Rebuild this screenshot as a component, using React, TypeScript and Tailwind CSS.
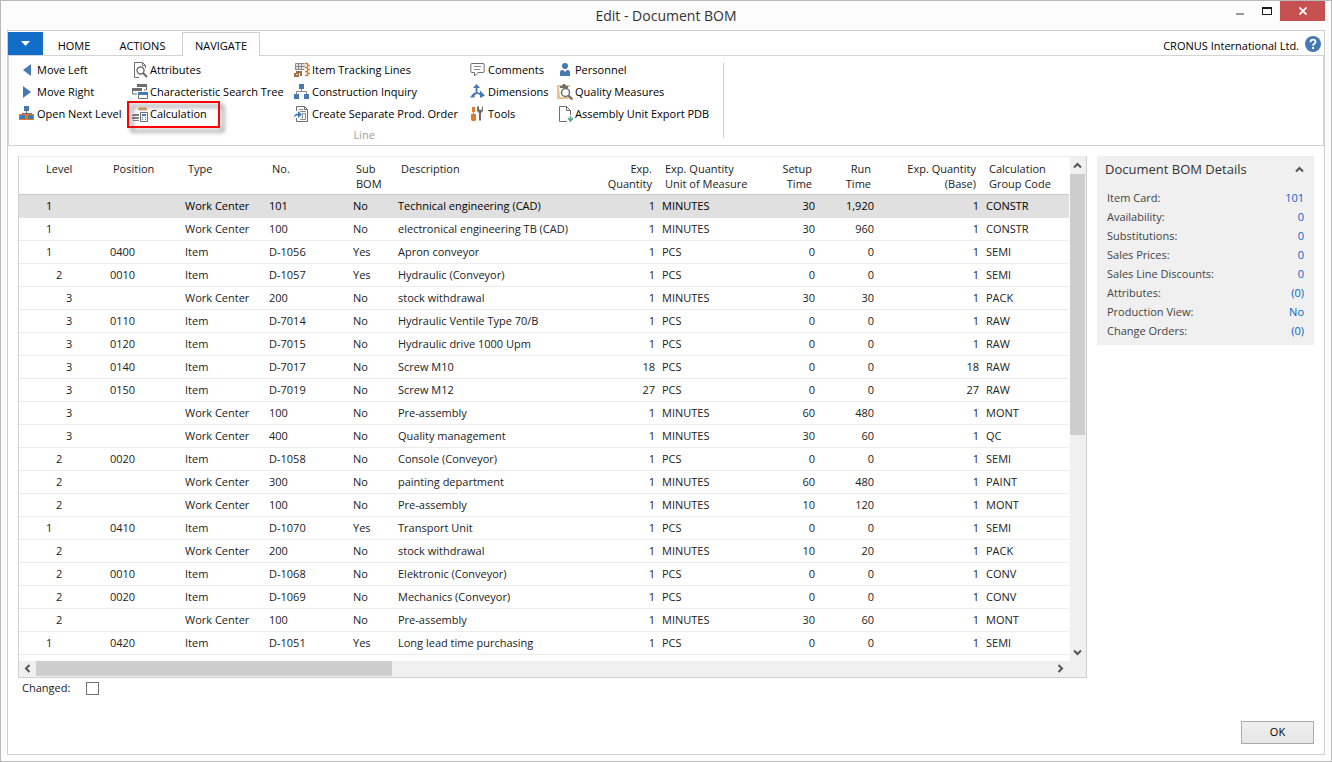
import React from "react";

const BLUE = "#4479b4";
const GRAY = "#6e6e6e";
const ORANGE = "#e07b28";

function Icon({ children }: { children: React.ReactNode }) {
  return (
    <svg viewBox="0 0 16 16" className="h-4 w-4 shrink-0" fill="none" aria-hidden="true">
      {children}
    </svg>
  );
}

const icons = {
  left: (
    <Icon>
      <path d="M12 2v12L4 8z" fill={BLUE} />
    </Icon>
  ),
  right: (
    <Icon>
      <path d="M4 2v12l8-6z" fill={BLUE} />
    </Icon>
  ),
  nextLevel: (
    <Icon>
      <path d="M5 0h5v5H5z" fill={BLUE} />
      <path d="M7 5h1v2h5v2h-1V8H4v1H3V7h4z" fill={GRAY} />
      <path d="M0 8h15v6H0z" fill={ORANGE} />
      <path d="M1 9h5v4H1zM9 9h5v4H9z" fill={BLUE} />
    </Icon>
  ),
  attributes: (
    <Icon>
      <path d="M7 15.500H2.500V.5h8l3 3V6M10.500.5v3h3" stroke={GRAY} />
      <circle cx="8.500" cy="8.500" r="3.500" stroke={GRAY} strokeWidth="1.400" />
      <path d="M11 11l4 4" stroke={GRAY} strokeWidth="2.200" />
    </Icon>
  ),
  searchTree: (
    <Icon>
      <path d="M5 0h10v3H5zM0 4h10v3H0z" fill={GRAY} />
      <path d="M14.500 3v3H12M.5 7v3H5" stroke={GRAY} />
      <path d="M6 8h10v3H6z" fill={BLUE} />
      <path d="M6.500 11v3.500h9V11" stroke={GRAY} />
    </Icon>
  ),
  calculation: (
    <Icon>
      <path d="M6 2h9v2H6z" fill="#dcaa6c" />
      <path d="M7 1h7v1H7zM7 4h7v1H7z" fill="#edcfa6" />
      <path d="M1 8h6v1H1zM0 9h7v1H0zM0 11h7v1H0zM0 12h7v1H0zM1 14h6v1H1z" fill="#858585" />
      <path d="M8.500 6.500h7v9h-7z" fill="#fff" stroke={GRAY} />
      <path d="M10 8h4v2h-4z" fill={BLUE} />
      <path d="M10 11h1v1h-1zM13 11h1v1h-1zM10 13h1v1h-1zM13 13h1v1h-1z" fill={BLUE} />
    </Icon>
  ),
  tracking: (
    <Icon>
      <path d="M2 2h9v6H2z" fill="#e3e3e3" />
      <path d="M1.500 1.500h9M1.500 1.500V8M1 4.500h10M1 7.500h9M4.500 1v7M7.500 1v7" stroke="#8a8a8a" />
      <path d="M13.500 1v13M11 1.500h2M14 3.500h2M11 5.500h2M14 7.500h2M11 9.500h2M14 11.500h2M11 13.500h3" stroke={ORANGE} strokeWidth="1.400" />
      <path d="M2 9h6v5H6v-3H2zM0 11h5v4H0z" fill="#9b6f48" />
      <path d="M2 12h2v1H2z" fill="#e9d6c4" />
    </Icon>
  ),
  inquiry: (
    <Icon>
      <path d="M5 0h5v5H5zM0 10h5v5H0zM10 10h5v5h-5z" fill={BLUE} />
      <path d="M7.500 5v2.500M2.500 10V7.500h10V10" stroke="#8a8a8a" />
    </Icon>
  ),
  prodOrder: (
    <Icon>
      <path d="M2.500 5V.5h8l3 3v12h-11V12M10.500.5v3h3" stroke={GRAY} />
      <path d="M5 3.500h4M6 5.500h6M8.500 7.500h3v6h-5v-1M8.500 7.500v5" stroke="#8a8a8a" />
      <path d="M0 12c0-3 1-4.500 4-4.500V5l4 3.500L4 12V9.500c-2 0-3 .5-4 2.500z" fill={BLUE} />
    </Icon>
  ),
  comments: (
    <Icon>
      <path
        d="M2 1.500h11a1.200 1.200 0 0 1 1.200 1.200v6.600a1.200 1.200 0 0 1-1.200 1.200H8L4.500 14v-3.500H2A1.200 1.200 0 0 1 .8 9.300V2.700A1.200 1.200 0 0 1 2 1.500z"
        stroke={GRAY}
      />
      <path d="M4 4.500h7M4 7.500h6" stroke="#8a8a8a" />
    </Icon>
  ),
  dimensions: (
    <Icon>
      <path d="M6.500 9V3M6.500 8.500L12 11M6.500 9L2 12" stroke={BLUE} strokeWidth="1.800" />
      <path d="M6.500 0L10 4H3zM10 6.500l5 5-5 2.500zM4.500 8v5.500H0z" fill={BLUE} />
    </Icon>
  ),
  tools: (
    <Icon>
      <path d="M2 1h3v5H2zM3 6h1v3H3zM1 8h5v6l-1 1H2l-1-1z" fill={ORANGE} />
      <path d="M7 1l2-1v3l1 1h1l1-1V0l1 1v4l-2 2v7l-1 1-1-1V7L7 5z" fill={GRAY} />
    </Icon>
  ),
  personnel: (
    <Icon>
      <circle cx="8" cy="4" r="3" fill={BLUE} />
      <path d="M3 14v-3.500C3 8.500 4.500 8 6 8l2 2 2-2c1.500 0 3 .5 3 2.500V14z" fill={BLUE} />
    </Icon>
  ),
  quality: (
    <Icon>
      <path d="M0 1h13v14H0z" fill="#e9c48c" />
      <path d="M2 3h11v10H3z" fill="#fff" />
      <path d="M3 4V2h2l1-2h2l1 2h2v2z" fill={GRAY} />
      <circle cx="8.500" cy="8.500" r="4" fill="#fff" stroke={GRAY} strokeWidth="1.500" />
      <path d="M11.500 11.500l4 4" stroke={GRAY} strokeWidth="2.200" />
    </Icon>
  ),
  exportPdb: (
    <Icon>
      <path d="M10 15.500H2.500V.5h7l4 4V9M9.500.5v4h4" stroke={GRAY} />
      <path d="M13.500 10v4M11 12l2.500 3 2.500-3" stroke="#5fa58a" strokeWidth="1.600" />
    </Icon>
  ),
};

type Action = { icon: keyof typeof icons; label: string; marked?: boolean };

const actionColumns: Action[][] = [
  [
    { icon: "left", label: "Move Left" },
    { icon: "right", label: "Move Right" },
    { icon: "nextLevel", label: "Open Next Level" },
  ],
  [
    { icon: "attributes", label: "Attributes" },
    { icon: "searchTree", label: "Characteristic Search Tree" },
    { icon: "calculation", label: "Calculation", marked: true },
  ],
  [
    { icon: "tracking", label: "Item Tracking Lines" },
    { icon: "inquiry", label: "Construction Inquiry" },
    { icon: "prodOrder", label: "Create Separate Prod. Order" },
  ],
  [
    { icon: "comments", label: "Comments" },
    { icon: "dimensions", label: "Dimensions" },
    { icon: "tools", label: "Tools" },
  ],
  [
    { icon: "personnel", label: "Personnel" },
    { icon: "quality", label: "Quality Measures" },
    { icon: "exportPdb", label: "Assembly Unit Export PDB" },
  ],
];

type Column = { title: string; width: string; right?: boolean };

const columns: Column[] = [
  { title: "Level", width: "w-[88px]" },
  { title: "Position", width: "w-[75px]" },
  { title: "Type", width: "w-[84px]" },
  { title: "No.", width: "w-[84px]" },
  { title: "Sub\nBOM", width: "w-[45px]" },
  { title: "Description", width: "" },
  { title: "Exp.\nQuantity", width: "w-[60px]", right: true },
  { title: "Exp. Quantity\nUnit of Measure", width: "w-[100px]" },
  { title: "Setup\nTime", width: "w-[60px]", right: true },
  { title: "Run\nTime", width: "w-[59px]", right: true },
  { title: "Exp. Quantity\n(Base)", width: "w-[105px]", right: true },
  { title: "Calculation\nGroup Code", width: "w-[86px]" },
];

const rows: string[][] = [
  ["1", "", "Work Center", "101", "No", "Technical engineering (CAD)", "1", "MINUTES", "30", "1,920", "1", "CONSTR"],
  ["1", "", "Work Center", "100", "No", "electronical engineering TB (CAD)", "1", "MINUTES", "30", "960", "1", "CONSTR"],
  ["1", "0400", "Item", "D-1056", "Yes", "Apron conveyor", "1", "PCS", "0", "0", "1", "SEMI"],
  ["2", "0010", "Item", "D-1057", "Yes", "Hydraulic (Conveyor)", "1", "PCS", "0", "0", "1", "SEMI"],
  ["3", "", "Work Center", "200", "No", "stock withdrawal", "1", "MINUTES", "30", "30", "1", "PACK"],
  ["3", "0110", "Item", "D-7014", "No", "Hydraulic Ventile Type 70/B", "1", "PCS", "0", "0", "1", "RAW"],
  ["3", "0120", "Item", "D-7015", "No", "Hydraulic drive 1000 Upm", "1", "PCS", "0", "0", "1", "RAW"],
  ["3", "0140", "Item", "D-7017", "No", "Screw M10", "18", "PCS", "0", "0", "18", "RAW"],
  ["3", "0150", "Item", "D-7019", "No", "Screw M12", "27", "PCS", "0", "0", "27", "RAW"],
  ["3", "", "Work Center", "100", "No", "Pre-assembly", "1", "MINUTES", "60", "480", "1", "MONT"],
  ["3", "", "Work Center", "400", "No", "Quality management", "1", "MINUTES", "30", "60", "1", "QC"],
  ["2", "0020", "Item", "D-1058", "No", "Console (Conveyor)", "1", "PCS", "0", "0", "1", "SEMI"],
  ["2", "", "Work Center", "300", "No", "painting department", "1", "MINUTES", "60", "480", "1", "PAINT"],
  ["2", "", "Work Center", "100", "No", "Pre-assembly", "1", "MINUTES", "10", "120", "1", "MONT"],
  ["1", "0410", "Item", "D-1070", "Yes", "Transport Unit", "1", "PCS", "0", "0", "1", "SEMI"],
  ["2", "", "Work Center", "200", "No", "stock withdrawal", "1", "MINUTES", "10", "20", "1", "PACK"],
  ["2", "0010", "Item", "D-1068", "No", "Elektronic (Conveyor)", "1", "PCS", "0", "0", "1", "CONV"],
  ["2", "0020", "Item", "D-1069", "No", "Mechanics (Conveyor)", "1", "PCS", "0", "0", "1", "CONV"],
  ["2", "", "Work Center", "100", "No", "Pre-assembly", "1", "MINUTES", "30", "60", "1", "MONT"],
  ["1", "0420", "Item", "D-1051", "Yes", "Long lead time purchasing", "1", "PCS", "0", "0", "1", "SEMI"],
];

const levelIndent: Record<string, string> = { "1": "pl-[27px]", "2": "pl-[37px]", "3": "pl-[47px]" };

const details: [string, string][] = [
  ["Item Card:", "101"],
  ["Availability:", "0"],
  ["Substitutions:", "0"],
  ["Sales Prices:", "0"],
  ["Sales Line Discounts:", "0"],
  ["Attributes:", "(0)"],
  ["Production View:", "No"],
  ["Change Orders:", "(0)"],
];

function Chevron({ d }: { d: string }) {
  return (
    <svg viewBox="0 0 9 9" className="h-[9px] w-[9px]" fill="none" stroke="#555" strokeWidth="2" aria-hidden="true">
      <path d={d} />
    </svg>
  );
}

function TitleBar() {
  return (
    <header className="grid h-[29px] shrink-0 grid-cols-[1fr_auto_1fr] items-start">
      <span />
      <h1 className="text-sm leading-[30px] text-[#333]">Edit - Document BOM</h1>
      <div className="flex justify-end pr-1.5">
        <button aria-label="Minimize" className="flex h-5 w-7 items-center justify-center">
          <svg viewBox="0 0 8 8" className="h-2 w-2" aria-hidden="true">
            <path d="M0 6h8v2H0z" fill="#999" />
          </svg>
        </button>
        <button aria-label="Maximize" className="flex h-5 w-[26px] items-center justify-center">
          <svg viewBox="0 0 10 8" className="h-2 w-2.5" aria-hidden="true">
            <path d="M0 0h10v8H0zM1 2v5h8V2z" fill="#1a1a1a" fillRule="evenodd" />
          </svg>
        </button>
        <button aria-label="Close" className="flex h-5 w-[45px] items-center justify-center bg-[#c75050]">
          <svg viewBox="0 0 8 8" className="h-2 w-2" stroke="#fff" strokeWidth="1.800" aria-hidden="true">
            <path d="M.5.5l7 7M7.500.5l-7 7" />
          </svg>
        </button>
      </div>
    </header>
  );
}

function TabRow() {
  return (
    <nav className="flex h-6 shrink-0 items-stretch pt-px text-black">
      <button aria-label="Application menu" className="flex w-[35px] items-center justify-center bg-[#116dc7]">
        <svg viewBox="0 0 9 5" className="h-[5px] w-[9px]" aria-hidden="true">
          <path d="M0 0h9L4.500 5z" fill="#fff" />
        </svg>
      </button>
      <button className="w-[62px] pt-1.5">HOME</button>
      <button className="w-[75px] pt-1.5">ACTIONS</button>
      <button className="relative -mb-px ml-0.5 w-[78px] border border-b-0 border-[#d0d0d0] bg-white pt-1">NAVIGATE</button>
      <div className="ml-auto flex items-center gap-1.5 pr-[3px]">
        <span className="pt-1.5">CRONUS International Ltd.</span>
        <button aria-label="Help">
          <svg viewBox="0 0 16 16" className="h-4 w-4" aria-hidden="true">
            <circle cx="8" cy="8" r="8" fill={BLUE} />
            <path d="M5.500 6.200C5.500 4.600 6.600 3.700 8 3.700s2.500.9 2.500 2.200c0 1.900-2.500 1.900-2.500 3.900" fill="none" stroke="#fff" strokeWidth="1.800" />
            <path d="M7 11h2v2H7z" fill="#fff" />
          </svg>
        </button>
      </div>
    </nav>
  );
}

function Ribbon() {
  return (
    <section className="flex h-[91px] shrink-0 border border-[#d3d3d3] text-black">
      <div className="flex flex-col pt-[3px] pr-3.5 pl-2.5">
        <div className="grid grid-cols-[113px_162px_176px_87px_auto]">
          {actionColumns.map((column) => (
            <div key={column[0].label} className="flex flex-col items-start">
              {column.map((action) => (
                <button key={action.label} className="relative flex h-[22px] items-center gap-0.5 whitespace-nowrap">
                  {icons[action.icon]}
                  {action.label}
                  {action.marked && (
                    <span className="absolute -top-0.5 -right-[13px] -bottom-[3px] -left-[5px] border-2 border-[#f00] drop-shadow-[4px_4px_2px_rgba(0,0,0,0.5)]" />
                  )}
                </button>
              ))}
            </div>
          ))}
        </div>
        <div className="text-center leading-5 text-[#a0a0a0]">Line</div>
      </div>
      <div className="my-[7px] w-px bg-[#d0d0d0]" />
    </section>
  );
}

function Lines() {
  return (
    <section className="min-w-0 flex-1 border border-[#cfcfcf] border-t-[#ececec]">
      <div className="flex">
        <div className="min-w-0 flex-1 overflow-hidden pb-1.5">
          <table className="w-full table-fixed border-separate border-spacing-0 text-[#222]">
            <thead>
              <tr className="h-[38px]">
                {columns.map((c, i) => (
                  <th
                    key={c.title}
                    className={`${c.width} border-b border-[#c8c8c8] pt-1 align-top leading-[15px] font-normal whitespace-pre ${
                      i === 0 ? "pl-[27px]" : "pl-1.5"
                    } ${c.right ? "pr-[7px] text-right" : "text-left"}`}
                  >
                    {c.title}
                  </th>
                ))}
              </tr>
            </thead>
            <tbody>
              {rows.map((row, r) => (
                <tr key={r} className={`h-[23px] ${r === 0 ? "bg-[#e0e0e0] text-black" : ""}`}>
                  {row.map((value, i) => (
                    <td
                      key={i}
                      className={`border-b py-0 leading-5 whitespace-nowrap ${
                        r === 0 ? "border-[#e0e0e0]" : "border-[#ececec]"
                      } ${i === 0 ? levelIndent[value] : "pl-[3px]"} ${columns[i].right ? "pr-1 text-right" : ""}`}
                    >
                      {value}
                    </td>
                  ))}
                </tr>
              ))}
            </tbody>
          </table>
        </div>
        <div className="ml-px flex w-4 flex-col bg-[#f0f0f0] pr-px">
          <button aria-label="Scroll up" className="flex h-[17px] items-center justify-center">
            <Chevron d="M1 6.500l3.500-3.500L8 6.500" />
          </button>
          <div className="h-[261px] bg-[#cdcdcd]" />
          <button aria-label="Scroll down" className="mt-auto flex h-[17px] items-center justify-center">
            <Chevron d="M1 2.500l3.500 3.500L8 2.500" />
          </button>
        </div>
      </div>
      <div className="flex h-4 bg-[#f0f0f0] pr-[17px] pb-px">
        <button aria-label="Scroll left" className="flex w-[17px] items-center justify-center">
          <Chevron d="M6.500 1L3 4.500 6.500 8" />
        </button>
        <div className="flex-1">
          <div className="h-full w-[35%] bg-[#cdcdcd]" />
        </div>
        <button aria-label="Scroll right" className="flex w-[17px] items-center justify-center">
          <Chevron d="M2.500 1L6 4.500 2.500 8" />
        </button>
      </div>
    </section>
  );
}

function DetailsBox() {
  return (
    <aside className="w-[217px] shrink-0 self-start bg-[#f0f0f0] pb-[5px]">
      <div className="mb-[5px] flex h-[27px] items-center justify-between pr-2.5 pl-2">
        <h2 className="text-[13px] text-[#333]">Document BOM Details</h2>
        <button aria-label="Collapse">
          <Chevron d="M1 6.500l3.500-3.500L8 6.500" />
        </button>
      </div>
      <dl className="px-2.5">
        {details.map(([label, value]) => (
          <div key={label} className="flex justify-between leading-[19px]">
            <dt className="text-[#444]">{label}</dt>
            <dd>
              <a href="#" className="text-[#0066cc]">
                {value}
              </a>
            </dd>
          </div>
        ))}
      </dl>
    </aside>
  );
}

export default function App() {
  return (
    <div className="flex min-h-screen flex-col border border-[#b9b9b9] bg-[#fcfcfc] font-['Open_Sans','Noto_Sans',sans-serif] text-[11px]">
      <TitleBar />
      <div className="mx-1.5 mb-1.5 flex flex-1 flex-col border border-[#d0d0d0] bg-white">
        <TabRow />
        <Ribbon />
        <main className="flex flex-1 flex-col p-2.5">
          <div className="flex gap-2.5">
            <Lines />
            <DetailsBox />
          </div>
          <div className="flex h-5 items-center gap-4 pl-1 text-[#222]">
            <label htmlFor="changed">Changed:</label>
            <input id="changed" type="checkbox" className="h-[13px] w-[13px] appearance-none border border-[#707070] bg-white" />
          </div>
          <button className="mt-auto h-[23px] w-[73px] self-end border border-[#acacac] bg-linear-to-b from-[#f0f0f0] to-[#e5e5e5] text-black">
            OK
          </button>
        </main>
      </div>
    </div>
  );
}
